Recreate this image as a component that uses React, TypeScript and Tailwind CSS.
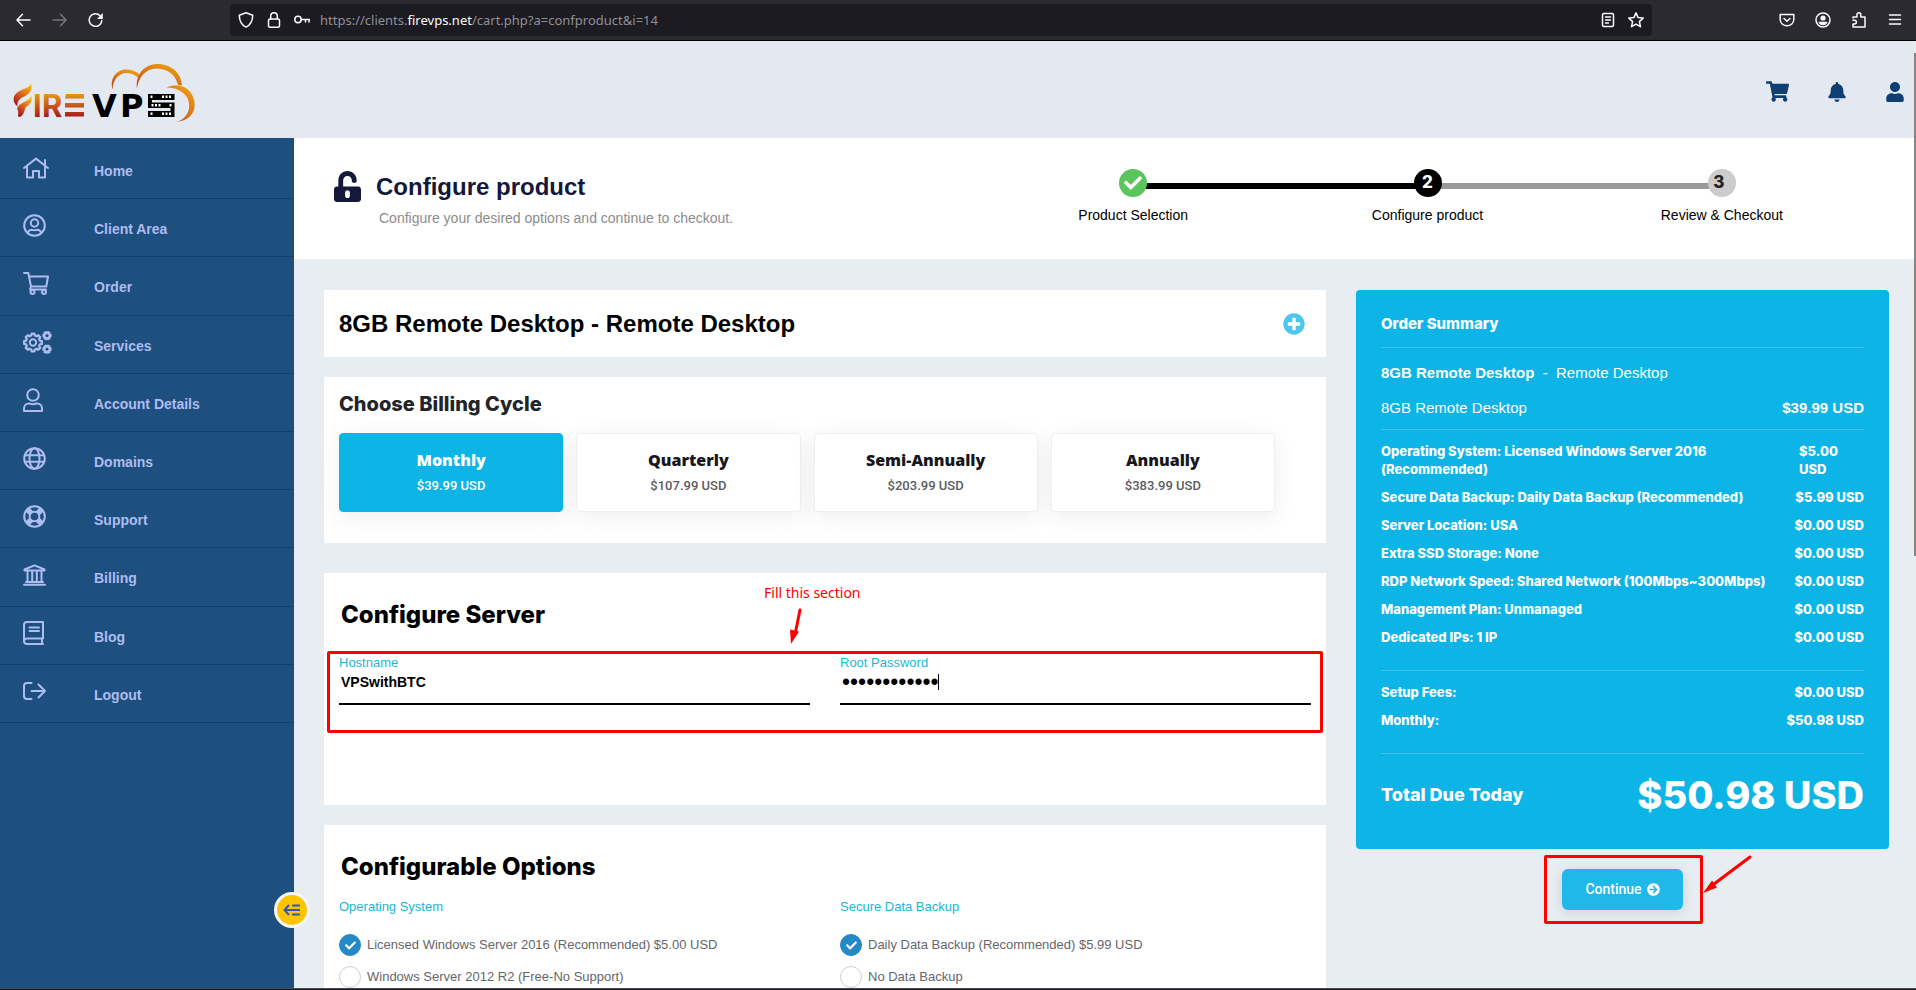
import React from "react";
import {
  FaArrowCircleRight,
  FaBell,
  FaCheck,
  FaPlusCircle,
  FaShoppingCart,
  FaUnlockAlt,
  FaUser,
} from "react-icons/fa";

const sans = "font-['Liberation_Sans',Arial,sans-serif]";
const heavy = "font-['Inter',sans-serif] font-extrabold";

/* ---------- drawings ---------- */

function gearPath(cx: number, cy: number, outer: number, inner: number, teeth: number) {
  const step = (Math.PI * 2) / teeth;
  const points: string[] = [];
  for (let i = 0; i < teeth; i++) {
    const a = i * step;
    const corners: [number, number][] = [
      [outer, a - step * 0.2],
      [outer, a + step * 0.2],
      [inner, a + step * 0.32],
      [inner, a + step * 0.68],
    ];
    corners.forEach(([r, t]) => {
      points.push(`${(cx + r * Math.cos(t)).toFixed(2)} ${(cy + r * Math.sin(t)).toFixed(2)}`);
    });
  }
  return `M${points.join("L")}Z`;
}

function Line({ w, h, children, sw = 2 }: { w: number; h: number; sw?: number; children: React.ReactNode }) {
  return (
    <svg
      width={w}
      height={h}
      viewBox={`0 0 ${w} ${h}`}
      fill="none"
      stroke="currentColor"
      strokeWidth={sw}
      strokeLinecap="round"
      strokeLinejoin="round"
      aria-hidden="true"
    >
      {children}
    </svg>
  );
}

const HomeIcon = () => (
  <Line w={26} h={22}>
    <path d="M1 11 13 1.6 25 11M4 9v11.500h6V14h6v6.500h6V9M22 3v5.500" />
  </Line>
);
const AccountIcon = () => (
  <Line w={23} h={23}>
    <circle cx="11.500" cy="11.500" r="10.300" />
    <circle cx="11.500" cy="9" r="3.700" />
    <path d="M4.800 18.800c1-2.600 2.500-3 4-3 1 .5 4.400.5 5.400 0 1.500 0 3 .4 4 3" />
  </Line>
);
const CartIcon = () => (
  <Line w={26} h={23}>
    <path d="M1 1h4.300L8 14.500h15.300L25 4.500H6.300M8 14.500l-1 3h16" />
    <circle cx="9.500" cy="20" r="2" />
    <circle cx="21" cy="20" r="2" />
  </Line>
);
const GearsIcon = () => (
  <Line w={29} h={23}>
    <path strokeWidth="2.300" d={gearPath(10, 11.5, 9, 7.2, 8)} />
    <circle cx="10" cy="11.500" r="3.200" />
    <path strokeWidth="2.300" d={gearPath(24, 4.6, 3.6, 2.6, 6)} />
    <path strokeWidth="2.300" d={gearPath(24, 18.2, 3.6, 2.6, 6)} />
  </Line>
);
const PersonIcon = () => (
  <Line w={20} h={24}>
    <circle cx="10" cy="7" r="5.800" />
    <path d="M1 23v-2.500C1 17.500 3 15.400 6 15.400c2 .9 6 .9 8 0 3 0 5 2.100 5 5.100V23z" />
  </Line>
);
const GlobeIcon = () => (
  <Line w={23} h={23}>
    <circle cx="11.500" cy="11.500" r="10.300" />
    <ellipse cx="11.500" cy="11.500" rx="5" ry="10.300" />
    <path d="M2 8.300h19M2 14.700h19" />
  </Line>
);
const LifeRingIcon = () => (
  <Line w={23} h={23}>
    <circle cx="11.500" cy="11.500" r="10.300" />
    <circle cx="11.500" cy="11.500" r="4.800" />
    <path
      strokeWidth="5.500"
      strokeLinecap="butt"
      d="m4.500 4.500 3.700 3.700M18.500 4.500l-3.700 3.700M4.500 18.500l3.700-3.700M18.500 18.500l-3.700-3.700"
    />
  </Line>
);
const BankIcon = () => (
  <Line w={23} h={22}>
    <path d="M1.500 6.500v-1L11.500 1.400l10 4.100v1zM1 20.800h21M3 18h17M4.500 8v9.500M9.200 8v9.500M13.800 8v9.500M18.500 8v9.500" />
  </Line>
);
const BookIcon = () => (
  <Line w={21} h={24}>
    <path d="M20 1H4a3 3 0 0 0-3 3v16a3 3 0 0 0 3 3h16M20 1v16.500H4a3 3 0 0 0-3 2.500M19 17.500V23M6.500 6.500H16M6.500 10H16" />
  </Line>
);
const LogoutIcon = () => (
  <Line w={23} h={18}>
    <path d="M8.500 1H4a3 3 0 0 0-3 3v10a3 3 0 0 0 3 3h4.500M8.500 9H22M15.500 2.500 22 9l-6.500 6.500" />
  </Line>
);

function Logo() {
  return (
    <svg width="184" height="62" viewBox="12 62 184 62" role="img" aria-label="Fire VPS">
      <defs>
        <linearGradient id="fire" gradientUnits="userSpaceOnUse" x1="0" y1="92" x2="0" y2="118">
          <stop offset="0" stopColor="#f0a00f" />
          <stop offset="1" stopColor="#a3161c" />
        </linearGradient>
        <linearGradient id="flame" x1="0.8" y1="0" x2="0.3" y2="1">
          <stop offset="0" stopColor="#fbbf12" />
          <stop offset="0.5" stopColor="#dd6a1c" />
          <stop offset="1" stopColor="#a3161c" />
        </linearGradient>
        <linearGradient id="cloud" x1="0.8" y1="0" x2="0.1" y2="1">
          <stop offset="0" stopColor="#f0a010" />
          <stop offset="1" stopColor="#c04a1c" />
        </linearGradient>
      </defs>
      <path fill="url(#flame)" d="M31 83c2.500 8-3 12-8 14-4 2-6 5-5.500 9.500C12 102 12.500 95 18.500 91.500 24 88.500 30 88 31 83z" />
      <path fill="url(#flame)" d="M31.500 96c1 7-2.500 9-5 10.500-2.500 2-1 7-6 10.200h-2.500c.5-4 .5-6-1-8.200 3-7 11-6 14.500-12.500z" />
      <text x="33" y="117" fill="url(#fire)" fontFamily="Inter, sans-serif" fontWeight="700" fontSize="31">I</text>
      <text x="42" y="117" fill="url(#fire)" fontFamily="Inter, sans-serif" fontWeight="700" fontSize="31">R</text>
      <path fill="url(#fire)" d="M66 94h18v4.500H65zM65 103h19v4.500H65zM65 112h19v4.500H65z" />
      <text x="92" y="117" fill="#000" fontFamily="DejaVu Sans, sans-serif" fontWeight="700" fontSize="32">V</text>
      <text x="120" y="117" fill="#000" fontFamily="DejaVu Sans, sans-serif" fontWeight="700" fontSize="32">P</text>
      <path fill="#000" d="M148 94h26.500v6H148zM148 102.500h26.500v5.500H148zM148 111h26.500v6H148zM148 99h4v5h-4zM170.500 107h4v5h-4z" />
      <path
        fill="#fff"
        d="M150.500 95.500h2v2.500h-2zM162 95.500h2v2.500h-2zM165.500 95.500h2v2.500h-2zM169 95.500h2v2.500h-2zM151.500 104h2v2.500h-2zM155 104h2v2.500h-2zM158.500 104h2v2.500h-2zM169.500 104h2v2.500h-2zM150.500 112.500h2v2.500h-2zM162 112.500h2v2.500h-2zM165.500 112.500h2v2.500h-2zM169 112.500h2v2.500h-2z"
      />
      <path fill="url(#cloud)" d="M112.500 89.500C108 72 126 63 140.500 75l-1.500 3.500C128 68 113.500 73 112.500 89.500z" />
      <path fill="url(#cloud)" d="M137 88.500C135 74 145 64 157.500 64c14 0 24 9.500 24.500 21.500l-4-.5C175.500 74 167 69 157.500 68.500 146 68 138.500 77 137 88.500z" />
      <path fill="url(#cloud)" d="M166 87.500c7-3 13-2.500 18-.5 15 8 16 33-8 35 14-3 18-21.500 6.500-29.500-4-3-9.500-5.500-16.500-5z" />
    </svg>
  );
}

/* ---------- browser toolbar ---------- */

function ToolButton({ label, children, dim }: { label: string; children: React.ReactNode; dim?: boolean }) {
  return (
    <button type="button" aria-label={label} className={dim ? "block text-[#77767e]" : "block text-[#fbfbfe]"}>
      {children}
    </button>
  );
}

function Toolbar() {
  return (
    <div className="flex h-[41px] shrink-0 items-center border-b border-black bg-[#2b2a33]">
      <div className="flex items-center gap-5 pl-4">
        <ToolButton label="Back">
          <Line w={16} h={16} sw={1.5}><path d="M14 8H1M6.500 2.300 1 8l5.500 5.700" /></Line>
        </ToolButton>
        <ToolButton label="Forward" dim>
          <Line w={16} h={16} sw={1.5}><path d="M1 8h13M8.500 2.300 14 8l-5.500 5.700" /></Line>
        </ToolButton>
        <ToolButton label="Reload">
          <Line w={16} h={16} sw={1.5}>
            <path d="M13.800 8.500A6.300 6.300 0 1 1 12 3.600" />
            <path fill="currentColor" stroke="none" d="M14.800 1v6H9z" />
          </Line>
        </ToolButton>
      </div>
      <div className="mr-[127px] ml-[126px] flex h-8 flex-1 items-center gap-3 rounded bg-[#1c1b22] pr-2 pl-2 text-[#fbfbfe]">
        <Line w={16} h={16} sw={1.5}><path d="M8 .8 1.300 3.300C1.300 9 3.500 13 8 15.200c4.500-2.200 6.700-6.200 6.700-11.900z" /></Line>
        <Line w={16} h={16} sw={1.5}>
          <rect x="2.500" y="7" width="11" height="8.200" rx="1.500" />
          <path d="M4.700 7V4a3.300 3.300 0 0 1 6.600 0v3" />
        </Line>
        <Line w={16} h={16} sw={1.5}>
          <circle cx="4" cy="7.500" r="3.200" />
          <path d="M7.300 7.500H15.500M11.500 7.500v2.500M15 7.500V10" />
        </Line>
        <div className="-ml-0.5 flex-1 font-['Noto_Sans',sans-serif] text-[13px] leading-5 text-[#8f8f98]">
          https://clients.<span className="text-[#fbfbfe]">firevps.net</span>/cart.php?a=confproduct&amp;i=14
        </div>
        <Line w={16} h={16} sw={1.5}>
          <rect x="2.500" y="1.500" width="11" height="13" rx="1.500" />
          <path d="M5.500 5h5M5.500 8h5M5.500 11h3" />
        </Line>
        <Line w={16} h={16} sw={1.5}>
          <path d="m8 .9 2.100 4.700 5.100.5-3.800 3.500 1.100 5.100L8 12.100l-4.500 2.600 1.100-5.100L.8 6.100l5.100-.5z" />
        </Line>
      </div>
      <div className="flex items-center gap-5 pr-[13px]">
        <ToolButton label="Save to Pocket">
          <Line w={16} h={16} sw={1.5}>
            <path d="M1.200 2.500h13.600v5a6.800 6.300 0 0 1-13.600 0zM5 6.500l3 2.800 3-2.800" />
          </Line>
        </ToolButton>
        <ToolButton label="Account">
          <Line w={16} h={16} sw={1.5}>
            <circle cx="8" cy="8" r="7" />
            <circle cx="8" cy="6" r="2.600" fill="currentColor" stroke="none" />
            <path fill="currentColor" stroke="none" d="M3.600 9.800h8.800c0 2-2 3.500-4.400 3.500s-4.400-1.500-4.400-3.500z" />
          </Line>
        </ToolButton>
        <ToolButton label="Extensions">
          <Line w={16} h={16} sw={1.5}>
            <path d="M2 6V5h4V2.700a1.900 1.900 0 0 1 3.800 0V5H14v10H2v-3h1.500a1.900 1.900 0 0 0 0-3.800H2" />
          </Line>
        </ToolButton>
        <ToolButton label="Menu">
          <Line w={16} h={16} sw={1.5}><path d="M2.500 3h11M2.500 7.500h11M2.500 12h11" /></Line>
        </ToolButton>
      </div>
    </div>
  );
}

/* ---------- page parts ---------- */

const menu = [
  { label: "Home", icon: <HomeIcon /> },
  { label: "Client Area", icon: <AccountIcon /> },
  { label: "Order", icon: <CartIcon /> },
  { label: "Services", icon: <GearsIcon /> },
  { label: "Account Details", icon: <PersonIcon /> },
  { label: "Domains", icon: <GlobeIcon /> },
  { label: "Support", icon: <LifeRingIcon /> },
  { label: "Billing", icon: <BankIcon /> },
  { label: "Blog", icon: <BookIcon /> },
  { label: "Logout", icon: <LogoutIcon /> },
];

function Sidebar() {
  return (
    <aside className="relative z-10 w-[294px] shrink-0 bg-[#1d4f7f] pt-[3px]">
      <nav className="grid h-[582px] auto-rows-fr">
        {menu.map((item) => (
          <a
            key={item.label}
            href="#"
            className="flex items-center border-b border-[#14406f] pl-[23px] text-[14px] font-bold text-[#aebcf0]"
          >
            <span className="w-[71px] pb-1">{item.icon}</span>
            <span className="pt-1">{item.label}</span>
          </a>
        ))}
      </nav>
      <button
        type="button"
        aria-label="Collapse menu"
        className="absolute -right-4 bottom-[60px] flex size-9 items-center justify-center rounded-full border-3 border-[#f6f6fa] bg-[#ffc400] text-[#3a55b0]"
      >
        <Line w={18} h={14}>
          <path strokeLinecap="butt" strokeLinejoin="miter" d="M1.500 7H17M6 2 1.500 7 6 12M9 2.500h8M9 11.500h8" />
        </Line>
      </button>
    </aside>
  );
}

function Step({
  label,
  dot,
  before,
  after,
  children,
}: {
  label: string;
  dot: string;
  before: string;
  after: string;
  children: React.ReactNode;
}) {
  return (
    <li className="text-center text-[14px] text-black">
      <div className="flex items-center">
        <span className={`mt-1.5 -mr-0.5 h-1.5 flex-1 ${before}`} />
        <span className={`relative flex size-7 items-center justify-center rounded-full text-[17px] ${heavy} ${dot}`}>
          {children}
        </span>
        <span className={`mt-1.5 -ml-0.5 h-1.5 flex-1 ${after}`} />
      </div>
      <div className="pt-2 leading-5">{label}</div>
    </li>
  );
}

const cycles = [
  { name: "Monthly", price: "$39.99 USD" },
  { name: "Quarterly", price: "$107.99 USD" },
  { name: "Semi-Annually", price: "$203.99 USD" },
  { name: "Annually", price: "$383.99 USD" },
];

function CycleCard({ name, price, active }: { name: string; price: string; active: boolean }) {
  const tone = active
    ? "border-[#0db4e6] bg-[#0db4e6] text-white"
    : "border-[#efefef] bg-white text-[#17171c]";
  return (
    <button
      type="button"
      aria-pressed={active}
      className={`h-[79px] rounded border text-center shadow-[0_5px_25px_rgba(0,0,0,0.07)] ${tone}`}
    >
      <span className="block font-['Open_Sans',sans-serif] text-[16px] leading-7 font-extrabold">{name}</span>
      <span
        className={`block pb-px font-['Roboto',sans-serif] text-[13px] leading-6 font-medium ${active ? "text-white" : "text-[#5c5c60]"}`}
      >
        {price}
      </span>
    </button>
  );
}

function OptionGroup({ title, name, options }: { title: string; name: string; options: string[] }) {
  return (
    <fieldset>
      <legend className="text-[13px] leading-5 text-[#17b8d4]">{title}</legend>
      <div className="pt-3">
        {options.map((text, i) => (
          <label key={text} className="flex h-8 items-center gap-1.5 text-[13px] text-[#66666a]">
            <span className="relative flex size-[22px] items-center justify-center">
              <input
                type="radio"
                name={name}
                defaultChecked={i === 0}
                className="peer size-[22px] appearance-none rounded-full border border-[#cfcfcf] bg-white checked:border-[#2489c5] checked:bg-[#2489c5]"
              />
              {i === 0 && <FaCheck size={11} className="absolute text-white" />}
            </span>
            {text}
          </label>
        ))}
      </div>
    </fieldset>
  );
}

const items = [
  ["Secure Data Backup: Daily Data Backup (Recommended)", "$5.99 USD"],
  ["Server Location: USA", "$0.00 USD"],
  ["Extra SSD Storage: None", "$0.00 USD"],
  ["RDP Network Speed: Shared Network (100Mbps~300Mbps)", "$0.00 USD"],
  ["Management Plan: Unmanaged", "$0.00 USD"],
  ["Dedicated IPs: 1 IP", "$0.00 USD"],
];

function SummaryRow({ label, price }: { label: string; price: string }) {
  return (
    <div className="flex justify-between whitespace-nowrap">
      <span>{label}</span>
      <span>{price}</span>
    </div>
  );
}

function Summary() {
  return (
    <aside>
      <section className="rounded bg-[#0db4e6] px-[25px] text-white">
        <h2 className={`border-b border-[#3dc5ee] pt-6 pb-[13px] text-[15px] leading-5 ${heavy}`}>Order Summary</h2>
        <div className="border-b border-[#3dc5ee] pt-[15px] pb-[11px] text-[15px] leading-5">
          <p>
            <b>8GB Remote Desktop</b>&nbsp; - &nbsp;Remote Desktop
          </p>
          <p className="flex justify-between pt-[15px]">
            <span>8GB Remote Desktop</span>
            <b>$39.99 USD</b>
          </p>
        </div>
        <div className={`flex flex-col gap-[10px] border-b border-[#3dc5ee] pt-3 pb-6 text-[13px] leading-[18px] ${heavy}`}>
          <div className="flex justify-between">
            <span className="max-w-[350px]">Operating System: Licensed Windows Server 2016 (Recommended)</span>
            <span className="w-[65px]">$5.00 USD</span>
          </div>
          {items.map(([label, price]) => (
            <SummaryRow key={label} label={label} price={price} />
          ))}
        </div>
        <div className={`flex flex-col gap-[10px] border-b border-[#3dc5ee] pt-3 pb-6 text-[13px] leading-[18px] ${heavy}`}>
          <SummaryRow label="Setup Fees:" price="$0.00 USD" />
          <SummaryRow label="Monthly:" price="$50.98 USD" />
        </div>
        <div className={`flex items-center justify-between pt-4 pb-[29px] leading-[50px] ${heavy}`}>
          <span className="text-[18px]">Total Due Today</span>
          <span className="text-[38px]">$50.98 USD</span>
        </div>
      </section>
      <div className="mt-5 flex justify-center">
        <div className="relative">
          <button
            type="button"
            className="flex h-[41px] w-[121px] items-center justify-center gap-[5px] rounded-md bg-[#1fb8e8] font-['Roboto',sans-serif] text-[14px] font-medium text-white shadow-[0_2px_12px_rgba(0,0,0,0.12)]"
          >
            Continue
            <FaArrowCircleRight size={13} />
          </button>
          <span className="pointer-events-none absolute -top-[14px] -right-5 -bottom-[14px] -left-[18px] rounded-[2px] border-3 border-[#ff0000]" />
          <svg className="pointer-events-none absolute -top-[14px] left-[141px]" width="50" height="40" viewBox="0 0 50 40" aria-hidden="true">
            <path d="M47 2 11 29" stroke="#f00" strokeWidth="3" strokeLinecap="round" />
            <path fill="#f00" d="M0 38 9 25.500l5 7z" />
          </svg>
        </div>
      </div>
    </aside>
  );
}

function ServerForm() {
  return (
    <section className="mt-[30px] h-[232px] bg-white px-[15px] pt-[26px]">
      <h2 className={`pl-0.5 text-[24px] leading-8 text-black ${heavy}`}>Configure Server</h2>
      <div className="relative mt-[22px] grid grid-cols-2 gap-[30px]">
        <div>
          <label htmlFor="hostname" className="block text-[13px] leading-5 text-[#17b8d4]">
            Hostname
          </label>
          <input
            id="hostname"
            defaultValue="VPSwithBTC"
            className="block h-8 w-full border-b-2 border-black pb-3 pl-0.5 text-[14px] font-bold text-black outline-none"
          />
        </div>
        <div className="relative">
          <label htmlFor="password" className="block text-[13px] leading-5 text-[#17b8d4]">
            Root Password
          </label>
          <input
            id="password"
            type="password"
            defaultValue="vpswithbtc12"
            className="block h-8 w-full border-b-2 border-black pb-3 pl-0.5 text-[23px] leading-5 text-black outline-none"
          />
          <span className="absolute top-[21px] left-[98px] h-4 w-px bg-black" />
        </div>
        <span className="pointer-events-none absolute -inset-x-[12px] -top-0.5 -bottom-7 rounded-[2px] border-3 border-[#ff0000]" />
        <div className="pointer-events-none absolute -top-[72px] left-[425px] font-['Noto_Sans',sans-serif] text-[14px] leading-6 text-[#ff0000]">
          Fill this section
          <svg className="ml-6" width="14" height="40" viewBox="0 0 14 40" aria-hidden="true">
            <path d="M12 5 7.500 27" stroke="#f00" strokeWidth="3" strokeLinecap="round" />
            <path fill="#f00" d="M3 39 2 24.500l9 2z" />
          </svg>
        </div>
      </div>
    </section>
  );
}

export default function App() {
  return (
    <div className={`flex h-screen flex-col overflow-hidden bg-[#e8edf1] ${sans}`}>
      <Toolbar />
      <div className="flex min-h-0 flex-1">
        <div className="flex min-w-0 flex-1 flex-col">
          <header className="flex h-[97px] shrink-0 items-center justify-between bg-[#e4e9f1] pr-[9px] pl-3">
            <a href="#" className="pt-1.5">
              <Logo />
            </a>
            <div className="flex items-center gap-[38px] pt-1 text-[#0e3f70]">
              <button type="button" aria-label="Cart"><FaShoppingCart size={23} /></button>
              <button type="button" aria-label="Notifications"><FaBell size={20} /></button>
              <button type="button" aria-label="Profile"><FaUser size={20} /></button>
            </div>
          </header>
          <div className="flex min-h-0 flex-1">
            <Sidebar />
            <main className="min-w-0 flex-1 overflow-hidden">
              <div className="flex h-[121px] justify-between bg-white pr-[45px] pl-10">
                <div className="flex gap-[15px] pt-[33px]">
                  <FaUnlockAlt size={31} className="w-[27px] text-[#16183a]" />
                  <div>
                    <h1 className="text-[24px] leading-8 font-bold text-[#16183a]">Configure product</h1>
                    <p className="pt-[5px] pl-[3px] text-[14px] leading-5 text-[#8c8c8c]">
                      Configure your desired options and continue to checkout.
                    </p>
                  </div>
                </div>
                <ol className="grid w-[883px] grid-cols-3 pt-[31px]">
                  <Step label="Product Selection" dot="bg-[#5ac55b] text-white" before="bg-transparent" after="bg-black">
                    <FaCheck size={18} />
                  </Step>
                  <Step label="Configure product" dot="bg-black text-white" before="bg-black" after="bg-[#999]">
                    2
                  </Step>
                  <Step label="Review & Checkout" dot="bg-[#ccc] pr-1.5 text-[#222]" before="bg-[#999]" after="bg-transparent">
                    3
                  </Step>
                </ol>
              </div>
              <div className="grid grid-cols-[1002fr_533fr] items-start gap-[30px] pt-[31px] pr-[25px] pl-[30px]">
                <div>
                  <section className="flex h-[67px] items-center justify-between bg-white pr-[21px] pl-[15px]">
                    <h2 className="text-[24px] font-bold text-black">8GB Remote Desktop - Remote Desktop</h2>
                    <button type="button" aria-label="Show details" className="text-[#4fc6ec]">
                      <FaPlusCircle size={22} />
                    </button>
                  </section>
                  <section className="mt-5 bg-white px-[15px] pt-[13px] pb-[31px]">
                    <h2 className={`text-[20px] leading-7 text-[#212529] ${heavy}`}>Choose Billing Cycle</h2>
                    <div className="grid grid-cols-4 gap-[13px] pt-[15px] pr-9">
                      {cycles.map((c, i) => (
                        <CycleCard key={c.name} name={c.name} price={c.price} active={i === 0} />
                      ))}
                    </div>
                  </section>
                  <ServerForm />
                  <section className="mt-5 bg-white px-[15px] pt-[26px] pb-10">
                    <h2 className={`pl-0.5 text-[24px] leading-8 text-black ${heavy}`}>Configurable Options</h2>
                    <div className="grid grid-cols-2 gap-[30px] pt-[14px]">
                      <OptionGroup
                        title="Operating System"
                        name="os"
                        options={[
                          "Licensed Windows Server 2016 (Recommended) $5.00 USD",
                          "Windows Server 2012 R2 (Free-No Support)",
                        ]}
                      />
                      <OptionGroup
                        title="Secure Data Backup"
                        name="backup"
                        options={["Daily Data Backup (Recommended) $5.99 USD", "No Data Backup"]}
                      />
                    </div>
                  </section>
                </div>
                <Summary />
              </div>
            </main>
          </div>
        </div>
        <div className="w-0.5 shrink-0 pt-3">
          <div className="h-[503px] bg-[#858585]" />
        </div>
      </div>
      <div className="h-0.5 shrink-0 border-t border-[#4a4a4a] bg-[#1c1b22]" />
    </div>
  );
}
